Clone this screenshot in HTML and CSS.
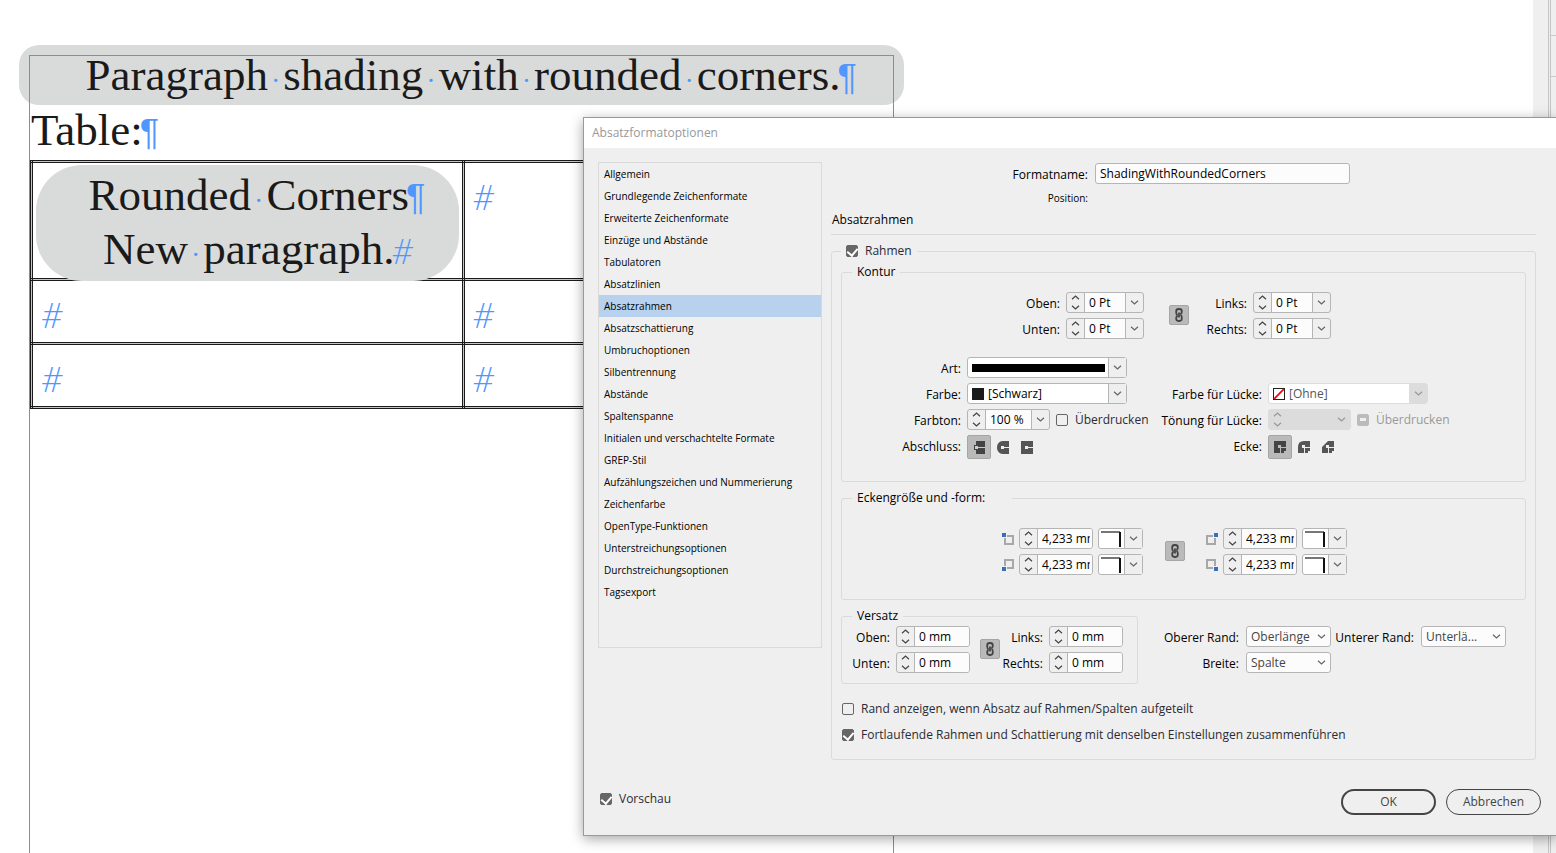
FILE: index.html
```html
<!DOCTYPE html>
<html lang="de">
<head>
  <meta charset="UTF-8">
  <meta name="viewport" content="width=device-width, initial-scale=1.0">
  <title>Absatzformatoptionen</title>
  <link rel="stylesheet" href="styles.css">
</head>
<body>
  <svg class="defs" aria-hidden="true">
    <symbol id="down" viewBox="0 0 8 5"><path d="M0.5 0.7L4 4L7.5 0.7" fill="none" stroke="currentColor" stroke-width="1.2"/></symbol>
    <symbol id="up" viewBox="0 0 8 5"><path d="M0.5 4.3L4 1L7.5 4.3" fill="none" stroke="currentColor" stroke-width="1.2"/></symbol>
    <symbol id="chain" viewBox="0 0 8 14">
      <g fill="none" stroke="#444" stroke-width="1.8">
        <path d="M2.6 7.2C1.4 6.8 1.2 5.6 1.2 4.6V3.4C1.2 1.8 2.200 1 3.6 1H4.4C6 1 6.8 1.9 6.8 3.4V4C6.800 5.2 6.2 5.9 5.2 6"/>
        <path d="M5.4 6.8C6.6 7.2 6.8 8.4 6.8 9.4V10.6C6.8 12.2 6 13 4.4 13H3.6C2 13 1.2 12.1 1.2 10.6V10C1.2 8.8 1.8 8.1 2.8 8"/>
        <path d="M4 4.5V9.5"/>
      </g>
    </symbol>
    <symbol id="corner" viewBox="0 0 20 16"><path d="M0 1H19" stroke="#777" stroke-width="2"/><path d="M19 1V16" stroke="#111" stroke-width="2"/></symbol>
  </svg>

  <div class="workspace">
    <main class="document">
      <div class="text-frame">
        <p class="shaded">Paragraph<i class="sp">·</i>shading<i class="sp">·</i>with<i class="sp">·</i>rounded<i class="sp">·</i>corners.<span class="mark">¶</span></p>
        <p class="plain">Table:<span class="mark">¶</span></p>
        <table>
          <tr class="tall">
            <td>
              <div class="cell-shade">
                <p>Rounded<i class="sp">·</i>Corners<span class="mark">¶</span></p>
                <p>New<i class="sp">·</i>paragraph.<span class="mark hash">#</span></p>
              </div>
            </td>
            <td><span class="end">#</span></td>
          </tr>
          <tr><td><span class="end">#</span></td><td><span class="end">#</span></td></tr>
          <tr><td><span class="end">#</span></td><td><span class="end">#</span></td></tr>
        </table>
      </div>
    </main>
    <div class="scrollbar"></div>
    <aside class="dock"><div></div><div></div></aside>
  </div>

  <section class="dialog" role="dialog" aria-labelledby="dialogTitle">
    <h1 id="dialogTitle">Absatzformatoptionen</h1>
    <div class="dialog-body">
      <ul class="categories">
        <li>Allgemein</li>
        <li>Grundlegende Zeichenformate</li>
        <li>Erweiterte Zeichenformate</li>
        <li>Einzüge und Abstände</li>
        <li>Tabulatoren</li>
        <li>Absatzlinien</li>
        <li class="active">Absatzrahmen</li>
        <li>Absatzschattierung</li>
        <li>Umbruchoptionen</li>
        <li>Silbentrennung</li>
        <li>Abstände</li>
        <li>Spaltenspanne</li>
        <li>Initialen und verschachtelte Formate</li>
        <li>GREP-Stil</li>
        <li>Aufzählungszeichen und Nummerierung</li>
        <li>Zeichenfarbe</li>
        <li>OpenType-Funktionen</li>
        <li>Unterstreichungsoptionen</li>
        <li>Durchstreichungsoptionen</li>
        <li>Tagsexport</li>
      </ul>

      <form class="settings" id="settings">
        <div class="name-row">
          <label for="styleName">Formatname:</label>
          <input type="text" class="text-input" id="styleName" value="ShadingWithRoundedCorners">
          <span class="small">Position:</span>
        </div>
        <h2>Absatzrahmen</h2>

        <fieldset class="outer">
          <legend><label class="check"><input type="checkbox" checked>Rahmen</label></legend>

          <fieldset class="stroke">
            <legend>Kontur</legend>
            <div class="widths">
              <label for="wTop">Oben:</label>
              <span class="spinner">
                <span class="steps"><button type="button" aria-label="Mehr"><svg><use href="#up"/></svg></button><button type="button" aria-label="Weniger"><svg><use href="#down"/></svg></button></span>
                <input type="text" id="wTop" value="0 Pt">
                <button type="button" class="drop" aria-label="Werte"><svg><use href="#down"/></svg></button>
              </span>
              <button type="button" class="link" aria-label="Verketten"><svg><use href="#chain"/></svg></button>
              <label for="wLeft">Links:</label>
              <span class="spinner">
                <span class="steps"><button type="button" aria-label="Mehr"><svg><use href="#up"/></svg></button><button type="button" aria-label="Weniger"><svg><use href="#down"/></svg></button></span>
                <input type="text" id="wLeft" value="0 Pt">
                <button type="button" class="drop" aria-label="Werte"><svg><use href="#down"/></svg></button>
              </span>
              <label for="wBottom">Unten:</label>
              <span class="spinner">
                <span class="steps"><button type="button" aria-label="Mehr"><svg><use href="#up"/></svg></button><button type="button" aria-label="Weniger"><svg><use href="#down"/></svg></button></span>
                <input type="text" id="wBottom" value="0 Pt">
                <button type="button" class="drop" aria-label="Werte"><svg><use href="#down"/></svg></button>
              </span>
              <label for="wRight">Rechts:</label>
              <span class="spinner">
                <span class="steps"><button type="button" aria-label="Mehr"><svg><use href="#up"/></svg></button><button type="button" aria-label="Weniger"><svg><use href="#down"/></svg></button></span>
                <input type="text" id="wRight" value="0 Pt">
                <button type="button" class="drop" aria-label="Werte"><svg><use href="#down"/></svg></button>
              </span>
            </div>

            <div class="look">
              <label for="kind">Art:</label>
              <span class="select split wide">
                <select id="kind"><option aria-label="Durchgezogen"></option></select>
                <span class="bar"></span>
                <span class="arrow"><svg><use href="#down"/></svg></span>
              </span>

              <label for="color" class="newrow">Farbe:</label>
              <span class="select split wide swatched">
                <select id="color"><option>[Schwarz]</option></select>
                <span class="swatch"></span>
                <span class="arrow"><svg><use href="#down"/></svg></span>
              </span>
              <label for="gapColor">Farbe für Lücke:</label>
              <span class="select split wide swatched disabled">
                <select id="gapColor" disabled><option>[Ohne]</option></select>
                <svg class="none" viewBox="0 0 12 12"><rect x="0.5" y="0.5" width="11" height="11" fill="#fff" stroke="#222"/><path d="M1.2 10.8L10.8 1.2" stroke="#f00" stroke-width="1.8"/></svg>
                <span class="arrow"><svg><use href="#down"/></svg></span>
              </span>

              <label for="tint" class="newrow">Farbton:</label>
              <span class="tint">
                <span class="spinner percent">
                  <span class="steps"><button type="button" aria-label="Mehr"><svg><use href="#up"/></svg></button><button type="button" aria-label="Weniger"><svg><use href="#down"/></svg></button></span>
                  <input type="text" id="tint" value="100 %">
                  <button type="button" class="drop" aria-label="Werte"><svg><use href="#down"/></svg></button>
                </span>
                <label class="check"><input type="checkbox">Überdrucken</label>
              </span>
              <label for="gapTint">Tönung für Lücke:</label>
              <span class="tint">
                <span class="spinner percent disabled">
                  <span class="steps"><button type="button" aria-label="Mehr" disabled><svg><use href="#up"/></svg></button><button type="button" aria-label="Weniger" disabled><svg><use href="#down"/></svg></button></span>
                  <input type="text" id="gapTint" disabled>
                  <button type="button" class="drop" aria-label="Werte" disabled><svg><use href="#down"/></svg></button>
                </span>
                <label class="check off"><input type="checkbox" disabled>Überdrucken</label>
              </span>

              <span class="caption newrow">Abschluss:</span>
              <span class="icons">
                <button type="button" class="on" aria-label="Abgeflacht"><svg viewBox="0 0 12 13"><path d="M3 0H12V13H3V9H1V4H3Z" fill="#444"/><path d="M5 6.5H12" stroke="#ccc"/><rect x="2" y="5" width="3" height="3" fill="#ccc"/></svg></button>
                <button type="button" aria-label="Rund"><svg viewBox="0 0 12 13"><path d="M12 0H6C2 0 0 3 0 6.5S2 13 6 13H12Z" fill="#555"/><path d="M5 6.5H12" stroke="#eee"/><rect x="4" y="5" width="3" height="3" fill="#eee"/></svg></button>
                <button type="button" aria-label="Überstehend"><svg viewBox="0 0 12 13"><path d="M0 0H12V13H0Z" fill="#555"/><path d="M5 6.5H12" stroke="#eee"/><rect x="4" y="5" width="3" height="3" fill="#eee"/></svg></button>
              </span>
              <span class="caption">Ecke:</span>
              <span class="icons">
                <button type="button" class="on" aria-label="Gehrung"><svg viewBox="0 0 12 13"><path d="M0 0H12V10H10V12H0Z" fill="#444"/><path d="M6.5 12V6.5H12" fill="none" stroke="#bbb"/><rect x="4" y="4" width="3" height="3" fill="#bbb"/></svg></button>
                <button type="button" aria-label="Abgerundet"><svg viewBox="0 0 12 13"><path d="M12 0H6Q0 0 0 6V12H10V10H12Z" fill="#555"/><path d="M6.5 12V6.5H12" fill="none" stroke="#eee"/><rect x="4" y="4" width="3" height="3" fill="#eee"/></svg></button>
                <button type="button" aria-label="Abgeschrägt"><svg viewBox="0 0 12 13"><path d="M12 0H6L0 6V12H10V10H12Z" fill="#555"/><path d="M6.5 12V6.5H12" fill="none" stroke="#eee"/><rect x="4" y="4" width="3" height="3" fill="#eee"/></svg></button>
              </span>
            </div>
          </fieldset>

          <fieldset class="corners">
            <legend>Eckengröße und -form:</legend>
            <div class="corner-grid">
              <svg class="pos" viewBox="0 0 12 12"><rect x="3" y="3" width="8" height="8" fill="none" stroke="#a8a8a8" stroke-width="2"/><rect width="5" height="5" fill="#efefef"/><rect width="4" height="4" fill="#3a6fb7"/></svg>
              <span class="spinner mm">
                <span class="steps"><button type="button" aria-label="Mehr"><svg><use href="#up"/></svg></button><button type="button" aria-label="Weniger"><svg><use href="#down"/></svg></button></span>
                <input type="text" aria-label="Oben links" value="4,233 mm">
              </span>
              <span class="select split shape">
                <select aria-label="Form oben links"><option></option></select>
                <svg class="corner"><use href="#corner"/></svg>
                <span class="arrow"><svg><use href="#down"/></svg></span>
              </span>
              <button type="button" class="link" aria-label="Verketten"><svg><use href="#chain"/></svg></button>
              <svg class="pos" viewBox="0 0 12 12"><rect x="1" y="3" width="8" height="8" fill="none" stroke="#a8a8a8" stroke-width="2"/><rect x="7" width="5" height="5" fill="#efefef"/><rect x="8" width="4" height="4" fill="#3a6fb7"/></svg>
              <span class="spinner mm">
                <span class="steps"><button type="button" aria-label="Mehr"><svg><use href="#up"/></svg></button><button type="button" aria-label="Weniger"><svg><use href="#down"/></svg></button></span>
                <input type="text" aria-label="Oben rechts" value="4,233 mm">
              </span>
              <span class="select split shape">
                <select aria-label="Form oben rechts"><option></option></select>
                <svg class="corner"><use href="#corner"/></svg>
                <span class="arrow"><svg><use href="#down"/></svg></span>
              </span>

              <svg class="pos" viewBox="0 0 12 12"><rect x="3" y="1" width="8" height="8" fill="none" stroke="#a8a8a8" stroke-width="2"/><rect y="7" width="5" height="5" fill="#efefef"/><rect y="8" width="4" height="4" fill="#3a6fb7"/></svg>
              <span class="spinner mm">
                <span class="steps"><button type="button" aria-label="Mehr"><svg><use href="#up"/></svg></button><button type="button" aria-label="Weniger"><svg><use href="#down"/></svg></button></span>
                <input type="text" aria-label="Unten links" value="4,233 mm">
              </span>
              <span class="select split shape">
                <select aria-label="Form unten links"><option></option></select>
                <svg class="corner"><use href="#corner"/></svg>
                <span class="arrow"><svg><use href="#down"/></svg></span>
              </span>
              <svg class="pos" viewBox="0 0 12 12"><rect x="1" y="1" width="8" height="8" fill="none" stroke="#a8a8a8" stroke-width="2"/><rect x="7" y="7" width="5" height="5" fill="#efefef"/><rect x="8" y="8" width="4" height="4" fill="#3a6fb7"/></svg>
              <span class="spinner mm">
                <span class="steps"><button type="button" aria-label="Mehr"><svg><use href="#up"/></svg></button><button type="button" aria-label="Weniger"><svg><use href="#down"/></svg></button></span>
                <input type="text" aria-label="Unten rechts" value="4,233 mm">
              </span>
              <span class="select split shape">
                <select aria-label="Form unten rechts"><option></option></select>
                <svg class="corner"><use href="#corner"/></svg>
                <span class="arrow"><svg><use href="#down"/></svg></span>
              </span>
            </div>
          </fieldset>

          <div class="offset-row">
            <fieldset class="offset">
              <legend>Versatz</legend>
              <div class="offset-grid">
                <label for="oTop">Oben:</label>
                <span class="spinner mm">
                  <span class="steps"><button type="button" aria-label="Mehr"><svg><use href="#up"/></svg></button><button type="button" aria-label="Weniger"><svg><use href="#down"/></svg></button></span>
                  <input type="text" id="oTop" value="0 mm">
                </span>
                <button type="button" class="link" aria-label="Verketten"><svg><use href="#chain"/></svg></button>
                <label for="oLeft">Links:</label>
                <span class="spinner mm">
                  <span class="steps"><button type="button" aria-label="Mehr"><svg><use href="#up"/></svg></button><button type="button" aria-label="Weniger"><svg><use href="#down"/></svg></button></span>
                  <input type="text" id="oLeft" value="0 mm">
                </span>
                <label for="oBottom">Unten:</label>
                <span class="spinner mm">
                  <span class="steps"><button type="button" aria-label="Mehr"><svg><use href="#up"/></svg></button><button type="button" aria-label="Weniger"><svg><use href="#down"/></svg></button></span>
                  <input type="text" id="oBottom" value="0 mm">
                </span>
                <label for="oRight">Rechts:</label>
                <span class="spinner mm">
                  <span class="steps"><button type="button" aria-label="Mehr"><svg><use href="#up"/></svg></button><button type="button" aria-label="Weniger"><svg><use href="#down"/></svg></button></span>
                  <input type="text" id="oRight" value="0 mm">
                </span>
              </div>
            </fieldset>
            <div class="edges">
              <label for="topEdge">Oberer Rand:</label>
              <span class="select"><select id="topEdge"><option>Oberlänge</option></select><span class="arrow"><svg><use href="#down"/></svg></span></span>
              <label for="bottomEdge">Unterer Rand:</label>
              <span class="select"><select id="bottomEdge"><option>Unterlä...</option></select><span class="arrow"><svg><use href="#down"/></svg></span></span>
              <label for="width">Breite:</label>
              <span class="select"><select id="width"><option>Spalte</option></select><span class="arrow"><svg><use href="#down"/></svg></span></span>
            </div>
          </div>

          <div class="options">
            <label class="check"><input type="checkbox">Rand anzeigen, wenn Absatz auf Rahmen/Spalten aufgeteilt</label>
            <label class="check"><input type="checkbox" checked>Fortlaufende Rahmen und Schattierung mit denselben Einstellungen zusammenführen</label>
          </div>
        </fieldset>
      </form>
    </div>

    <footer>
      <label class="check"><input type="checkbox" checked>Vorschau</label>
      <div class="actions">
        <button type="submit" form="settings" class="pill primary">OK</button>
        <button type="button" class="pill">Abbrechen</button>
      </div>
    </footer>
  </section>
</body>
</html>
```

FILE: styles.css
```css
* {
  box-sizing: border-box;
}
body {
  margin: 0;
  position: relative;
  height: 100vh;
  overflow: hidden;
  background: #fff;
  color: #000;
  font: 12px/20px "Open Sans", "Noto Sans", sans-serif;
}
p, h1, h2, ul, fieldset {
  margin: 0;
  padding: 0;
}
button, input, select {
  margin: 0;
  padding: 0;
  border: none;
  background: none;
  color: inherit;
  font: inherit;
}
svg {
  display: block;
}
.defs {
  position: absolute;
  width: 0;
  height: 0;
}

/* document window */
.workspace {
  display: flex;
  height: 100%;
}
.document {
  flex: 1;
  padding: 55px 0 0 29px;
}
.text-frame {
  position: relative;
  width: 865px;
  height: 100%;
  padding: 1px;
  color: #1a1a1a;
  font: 45px/54px "Liberation Serif", serif;
}
.text-frame::after {
  content: "";
  position: absolute;
  inset: 0;
  border: 1px solid #4f97ff;
  border-bottom: none;
  pointer-events: none;
}
.shaded {
  margin: -11px -11px 0;
  padding: 3px 0;
  border-radius: 20px;
  background: #d9dbda;
  text-align: center;
}
.plain {
  padding: 0 1px 5px;
  line-height: 50px;
}
.sp {
  padding: 0 3px;
  color: #4f97ff;
  font-size: 28px;
  font-style: normal;
  line-height: 0;
}
.mark {
  display: inline-block;
  width: 0;
  margin-left: -3px;
  color: #4f97ff;
  font-family: "Liberation Sans", sans-serif;
  font-size: 36px;
  line-height: 0;
}
.hash, .end {
  color: #4f97ff;
  font-family: "Open Sans", sans-serif;
  font-size: 34px;
  font-style: italic;
  font-weight: 300;
}
table {
  width: calc(100% + 3px);
  border-collapse: collapse;
  table-layout: fixed;
  background: #a9caff;
}
td {
  height: 64px;
  padding: 2px 3px;
  border: 3px double #1a1a1a;
  background: #fff;
  background-clip: padding-box;
  vertical-align: top;
}
.tall td {
  height: 118px;
}
.end {
  display: block;
  height: 54px;
  padding: 5px 5px 0;
  line-height: 54px;
}
.cell-shade {
  position: relative;
  margin-bottom: -5px;
  padding: 3px 0 5px;
  border-radius: 46px;
  background: #d9dbda;
  text-align: center;
}
.scrollbar {
  width: 15px;
  background: #efefef;
}
.dock {
  width: 8px;
  border-left: 3px double #c4c4c4;
  background: #efefef;
}
.dock div {
  height: 36px;
  border-bottom: 1px solid #c8c8c8;
}
.dock div + div {
  height: 41px;
}

/* dialog */
.dialog {
  position: absolute;
  top: 117px;
  left: 583px;
  right: 0;
  border: 1px solid #999;
  border-right: none;
  background: #efefef;
  box-shadow: 0 3px 12px rgba(0, 0, 0, 0.35);
}
.dialog h1 {
  height: 30px;
  padding-left: 8px;
  background: #fff;
  color: #999;
  font-size: 12px;
  font-weight: normal;
  line-height: 30px;
}
.dialog-body {
  display: flex;
  gap: 9px;
  padding: 14px 20px 0 14px;
  align-items: flex-start;
}
.categories {
  width: 224px;
  height: 486px;
  border: 1px solid #dadada;
  list-style: none;
  font-size: 10px;
  line-height: 22px;
}
.categories li {
  padding-left: 5px;
}
.categories .active {
  background: #b7d1ee;
}
.settings {
  flex: 1;
}
.name-row {
  display: grid;
  grid-template-columns: 257px 255px;
  column-gap: 7px;
  row-gap: 6px;
  padding-top: 1px;
}
.name-row label, .small {
  text-align: right;
}
.name-row label {
  height: 21px;
  line-height: 23px;
}
.small {
  font-size: 10px;
  line-height: 16px;
}
.text-input {
  height: 21px;
  padding: 0 4px;
  border: 1px solid #b5b5b5;
  border-radius: 3px;
  background: #fcfcfc;
}
h2 {
  margin: 4px 0 6px;
  padding: 0 0 4px 1px;
  border-bottom: 1px solid #dadada;
  font-size: 12px;
  font-weight: normal;
}
fieldset {
  min-width: 0;
  border: 1px solid #dadada;
  border-radius: 3px;
}
legend {
  margin-left: 10px;
  padding: 0 5px;
}
.outer {
  padding: 1px 9px 14px;
}
.outer > legend {
  margin-left: 0;
}
.stroke {
  padding: 10px 0 22px;
}
.corners {
  margin-top: 6px;
  padding: 20px 0 24px;
}
.corners legend {
  padding-right: 27px;
}
.widths, .look, .corner-grid, .offset-grid, .edges {
  display: grid;
  column-gap: 6px;
  row-gap: 5px;
}
.widths {
  grid-template-columns: 218px 78px 39px 52px 78px;
}
.look {
  grid-template-columns: 119px 178px 111px 1fr;
  margin-top: 18px;
}
.widths label, .look > label, .caption, .offset-grid label, .edges label {
  justify-self: end;
  height: 21px;
  line-height: 23px;
  white-space: nowrap;
}
.newrow {
  grid-column: 1;
}
.corner-grid {
  grid-template-columns: 12px 74px 45px 53px 12px 74px 45px;
  column-gap: 5px;
  padding-left: 160px;
}
.offset-row {
  display: flex;
  gap: 22px;
  margin-top: 6px;
}
.offset {
  width: 297px;
  padding-bottom: 10px;
}
.offset-grid {
  grid-template-columns: 48px 74px 24px 37px 74px;
}
.edges {
  grid-template-columns: 79px 85px 76px 85px;
  column-gap: 7px;
  align-content: start;
  padding-top: 20px;
}
.options {
  display: flex;
  flex-direction: column;
  gap: 6px;
  margin-top: 15px;
  padding-left: 1px;
}

/* controls */
.spinner {
  display: flex;
  flex: none;
  width: 78px;
  height: 21px;
  border: 1px solid #b5b5b5;
  border-radius: 3px;
  overflow: hidden;
}
.spinner.percent {
  width: 83px;
}
.spinner.mm {
  width: 74px;
}
.steps {
  display: flex;
  flex-direction: column;
  width: 18px;
  border-right: 1px solid #b5b5b5;
}
.steps button {
  display: grid;
  flex: 1;
  place-items: center;
  color: #444;
}
.steps svg, .drop svg, .arrow svg {
  width: 9px;
  height: 5px;
}
.spinner input {
  flex: 1;
  min-width: 0;
  padding: 0 2px 0 4px;
  background: #fcfcfc;
}
.drop, .arrow {
  display: grid;
  place-items: center;
  width: 18px;
  color: #666;
}
.drop {
  border-left: 1px solid #b5b5b5;
}
.spinner.disabled {
  border-color: #dcdcdc;
  background: #dcdcdc;
}
.disabled .steps, .disabled .drop {
  border-color: transparent;
}
.disabled .steps button, .disabled .drop, .disabled .arrow {
  color: #999;
}
.spinner.disabled input {
  background: none;
}
.select {
  position: relative;
  display: block;
  height: 21px;
}
.select.wide {
  width: 160px;
}
.select select {
  appearance: none;
  width: 100%;
  height: 21px;
  padding: 0 18px 0 4px;
  border: 1px solid #b5b5b5;
  border-radius: 3px;
  background: #fcfcfc;
  color: #444;
}
.arrow {
  position: absolute;
  top: 1px;
  right: 1px;
  bottom: 1px;
  pointer-events: none;
}
.split .arrow {
  border-left: 1px solid #b5b5b5;
  background: #efefef;
}
.split select {
  background: #fff;
  color: #000;
}
.select.swatched select {
  padding-left: 20px;
}
.select.disabled select {
  border-color: #dcdcdc;
  color: #555;
  opacity: 1;
}
.select.disabled .arrow {
  border-color: #dcdcdc;
  background: #dcdcdc;
}
.bar, .swatch, .none, .corner {
  position: absolute;
  left: 5px;
  pointer-events: none;
}
.bar {
  top: 7px;
  right: 22px;
  height: 8px;
  background: #000;
}
.swatch, .none {
  top: 5px;
  width: 12px;
  height: 12px;
}
.swatch {
  background: #1a1a1a;
}
.corner {
  top: 3px;
  left: 3px;
  width: 20px;
  height: 16px;
}
.link {
  display: grid;
  grid-row: span 2;
  place-self: center end;
  place-items: center;
  width: 20px;
  height: 20px;
  margin-bottom: 2px;
  border: 1px solid #a5a5a5;
  border-radius: 2px;
  background: #bababa;
}
.corner-grid .link {
  justify-self: center;
}
.link svg {
  width: 8px;
  height: 14px;
}
.pos {
  align-self: center;
  width: 12px;
  height: 12px;
}
.tint {
  display: flex;
  gap: 6px;
}
.icons {
  display: flex;
}
.icons button {
  display: grid;
  place-items: center;
  width: 24px;
  height: 24px;
  border-radius: 2px;
}
.icons .on {
  border: 1px solid #a5a5a5;
  background: #bababa;
}
.icons svg {
  width: 12px;
  height: 13px;
}
.check {
  display: flex;
  align-items: center;
  gap: 7px;
  color: #2b2b33;
  white-space: nowrap;
}
.check input {
  appearance: none;
  display: grid;
  flex: none;
  place-items: center;
  width: 12px;
  height: 12px;
  border: 1px solid #666;
  border-radius: 2px;
}
.check input:checked {
  background: #666;
}
.check input:checked::after {
  content: "";
  width: 5px;
  height: 8px;
  margin-bottom: 2px;
  border: solid #fff;
  border-width: 0 2px 2px 0;
  transform: rotate(40deg);
}
.check input:disabled {
  border-color: #bbb;
  background: #bbb;
}
.check input:disabled::after {
  content: "";
  width: 6px;
  height: 3px;
  background: #efefef;
}
.check.off {
  color: #999;
}
footer {
  display: flex;
  justify-content: space-between;
  align-items: flex-start;
  padding: 29px 15px 20px 16px;
}
.actions {
  display: flex;
  gap: 10px;
}
.pill {
  width: 95px;
  height: 26px;
  border: 1px solid #444;
  border-radius: 13px;
  color: #444;
}
.pill.primary {
  border-width: 2px;
}
```
